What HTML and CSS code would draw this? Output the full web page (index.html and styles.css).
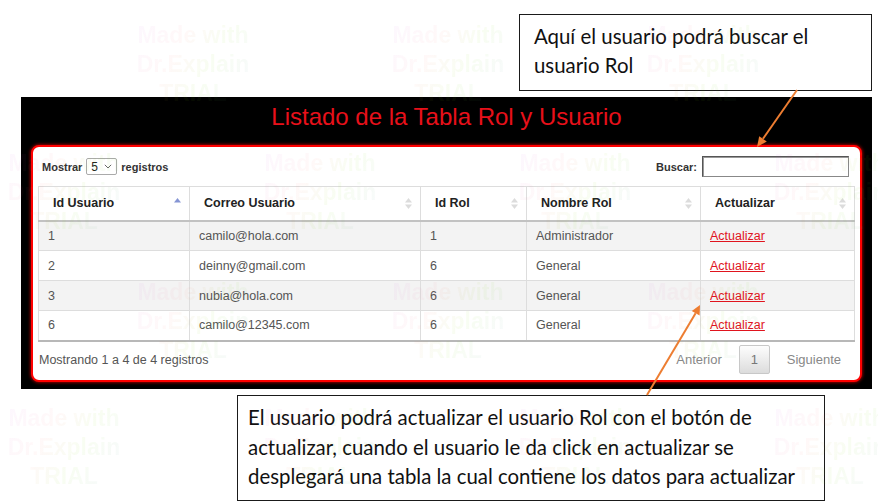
FILE: index.html
```html
<!DOCTYPE html>
<html lang="es">
<head>
<meta charset="utf-8">
<title>Listado de la Tabla Rol y Usuario</title>
<link rel="stylesheet" href="styles.css">
</head>
<body>
<div class="page">
  <div class="note note-top">Aquí el usuario podrá buscar el<br>usuario Rol</div>

  <section class="panel">
    <h1 class="title">Listado de la Tabla Rol y Usuario</h1>
    <div class="card">
      <div class="controls">
        <div class="length">Mostrar
          <span class="select"><span>5</span>
            <svg width="8" height="5" viewBox="0 0 8 5"><path d="M0.8 0.8 L4 4 L7.2 0.8" fill="none" stroke="#666" stroke-width="1"/></svg>
          </span>
          registros</div>
        <label class="search">Buscar: <input type="text" class="search-input"></label>
      </div>

      <table class="grid">
        <colgroup>
          <col class="c1"><col class="c2"><col class="c3"><col class="c4"><col class="c5">
        </colgroup>
        <thead>
          <tr>
            <th><div class="th-in">Id Usuario<svg class="sort asc" width="7" height="11" viewBox="0 0 7 11"><path class="up" d="M0 4.5 L3.5 0 L7 4.5Z"/><path class="down" d="M0 6.5 L3.5 11 L7 6.5Z"/></svg></div></th>
            <th><div class="th-in">Correo Usuario<svg class="sort" width="7" height="11" viewBox="0 0 7 11"><path class="up" d="M0 4.5 L3.5 0 L7 4.5Z"/><path class="down" d="M0 6.5 L3.5 11 L7 6.5Z"/></svg></div></th>
            <th><div class="th-in">Id Rol<svg class="sort" width="7" height="11" viewBox="0 0 7 11"><path class="up" d="M0 4.5 L3.5 0 L7 4.5Z"/><path class="down" d="M0 6.5 L3.5 11 L7 6.5Z"/></svg></div></th>
            <th><div class="th-in">Nombre Rol<svg class="sort" width="7" height="11" viewBox="0 0 7 11"><path class="up" d="M0 4.5 L3.5 0 L7 4.5Z"/><path class="down" d="M0 6.5 L3.5 11 L7 6.5Z"/></svg></div></th>
            <th><div class="th-in">Actualizar<svg class="sort" width="7" height="11" viewBox="0 0 7 11"><path class="up" d="M0 4.5 L3.5 0 L7 4.5Z"/><path class="down" d="M0 6.5 L3.5 11 L7 6.5Z"/></svg></div></th>
          </tr>
        </thead>
        <tbody>
          <tr class="odd"><td>1</td><td>camilo@hola.com</td><td>1</td><td>Administrador</td><td><a href="#">Actualizar</a></td></tr>
          <tr><td>2</td><td>deinny@gmail.com</td><td>6</td><td>General</td><td><a href="#">Actualizar</a></td></tr>
          <tr class="odd"><td>3</td><td>nubia@hola.com</td><td>6</td><td>General</td><td><a href="#">Actualizar</a></td></tr>
          <tr><td>6</td><td>camilo@12345.com</td><td>6</td><td>General</td><td><a href="#">Actualizar</a></td></tr>
        </tbody>
      </table>

      <div class="footer">
        <span class="info">Mostrando 1 a 4 de 4 registros</span>
        <div class="paging">
          <span class="pg">Anterior</span>
          <span class="pg-btn">1</span>
          <span class="pg">Siguiente</span>
        </div>
      </div>
    </div>
  </section>

  <div class="note note-bottom">El usuario podrá actualizar el usuario Rol con el botón de<br>actualizar, cuando el usuario le da click en actualizar se<br>desplegará una tabla la cual contiene los datos para actualizar</div>

  <svg class="arrows" width="878" height="503" viewBox="0 0 878 503">
    <line x1="797" y1="90" x2="763" y2="138.8" stroke="#ED7D31" stroke-width="2"/>
    <polygon points="757,147 759.2,136.3 766.8,141.4" fill="#ED7D31"/>
    <line x1="647" y1="395" x2="695.6" y2="313.3" stroke="#ED7D31" stroke-width="2"/>
    <polygon points="700,305 699.6,315.6 691.8,311" fill="#ED7D31"/>
  </svg>

  <div class="watermarks" aria-hidden="true">
    <div class="wm w1">Made with<br>Dr.Explain<br>TRIAL</div>
    <div class="wm w2">Made with<br>Dr.Explain<br>TRIAL</div>
    <div class="wm w3">Made with<br>Dr.Explain<br>TRIAL</div>
    <div class="wm w4">Made with<br>Dr.Explain<br>TRIAL</div>
    <div class="wm w5">Made with<br>Dr.Explain<br>TRIAL</div>
    <div class="wm w6">Made with<br>Dr.Explain<br>TRIAL</div>
    <div class="wm w7">Made with<br>Dr.Explain<br>TRIAL</div>
    <div class="wm w8">Made with<br>Dr.Explain<br>TRIAL</div>
    <div class="wm w9">Made with<br>Dr.Explain<br>TRIAL</div>
    <div class="wm w10">Made with<br>Dr.Explain<br>TRIAL</div>
    <div class="wm w11">Made with<br>Dr.Explain<br>TRIAL</div>
    <div class="wm w12">Made with<br>Dr.Explain<br>TRIAL</div>
    <div class="wm w13">Made with<br>Dr.Explain<br>TRIAL</div>
    <div class="wm w14">Made with<br>Dr.Explain<br>TRIAL</div>
  </div>
</div>
</body>
</html>
```

FILE: styles.css
```css
* { box-sizing: border-box; }

html, body {
  margin: 0;
  padding: 0;
  background: #fff;
}

.page {
  position: relative;
  width: 878px;
  height: 503px;
  overflow: hidden;
  display: flex;
  flex-direction: column;
  align-items: flex-start;
  font-family: "Liberation Sans", Arial, sans-serif;
}

/* Callout notes */
.note {
  border: 1px solid #1a1a1a;
  background: #fff;
  font-family: Lato, "Open Sans", sans-serif;
  font-size: 20.4px;
  color: #111;
  line-height: 29.5px;
  white-space: nowrap;
  position: relative;
  z-index: 3;
}

.note-top {
  margin: 14px 0 0 519px;
  width: 353px;
  height: 77px;
  padding: 7px 0 0 14px;
  line-height: 29px;
}

.note-bottom {
  margin: 6px 0 0 237px;
  width: 588px;
  height: 106px;
  padding: 7px 0 0 10px;
}

/* Black panel */
.panel {
  margin: 6px 0 0 21px;
  width: 851px;
  height: 292px;
  background: #000;
  padding: 0 10px 7px 10px;
  display: flex;
  flex-direction: column;
}

.title {
  margin: 0;
  height: 48px;
  padding-top: 6px;
  line-height: 28px;
  font-size: 24px;
  font-weight: normal;
  color: #e8101a;
  text-align: center;
  font-family: "Liberation Sans", Arial, sans-serif;
}

.card {
  flex: 1;
  background: #fff;
  border: 2px solid #f00;
  border-radius: 8px;
  box-shadow: 0 0 3px 1px rgba(255, 0, 0, 0.55);
  padding: 0 6px 0 5px;
  display: flex;
  flex-direction: column;
}

/* Controls */
.controls {
  height: 21px;
  margin: 9px 0 9px;
  padding: 0 5px 0 4px;
  display: flex;
  justify-content: space-between;
  align-items: center;
  font-size: 11px;
  font-weight: bold;
  color: #333;
}

.length {
  display: flex;
  align-items: center;
  gap: 4px;
}

.select {
  width: 31px;
  height: 17px;
  border: 1px solid #aaa;
  border-radius: 2px;
  display: flex;
  align-items: center;
  justify-content: space-between;
  padding: 0 4px 0 4px;
  font-size: 12px;
  font-weight: normal;
  color: #222;
  background: #fff;
}

.search {
  display: flex;
  align-items: center;
  gap: 5px;
}

.search-input {
  width: 147px;
  height: 21px;
  border: 1px solid #555;
  border-right-color: #888;
  border-bottom-color: #888;
  box-shadow: inset 1px 1px 0 #999;
  margin: 0;
  padding: 0 4px;
  background: #fff;
}

/* Table */
.grid {
  width: 816px;
  border-collapse: collapse;
  table-layout: fixed;
  font-size: 12.5px;
}

.c1 { width: 151px; }
.c2 { width: 231px; }
.c3 { width: 106px; }
.c4 { width: 174px; }
.c5 { width: 154px; }

.grid th {
  height: 34px;
  padding: 0 8px 0 14px;
  text-align: left;
  font-weight: bold;
  color: #222;
  border: 1px solid #ddd;
  border-bottom: 2px solid #c2c2c2;
  background: #fff;
}

.th-in {
  display: flex;
  justify-content: space-between;
  align-items: center;
}

.sort .up, .sort .down { fill: #dcdcdc; }
.sort.asc .up { fill: #8595d4; }
.sort.asc .down { fill: #fff; }

.grid td {
  height: 30px;
  padding: 0 9px;
  color: #555;
  border: 1px solid #ddd;
  background: #fff;
}

.grid tr.odd td { background: #f3f3f3; }

.grid tbody tr:last-child td { border-bottom: 2px solid #b8b8b8; }

.grid a {
  color: #e0141e;
  text-decoration: underline;
}

/* Footer */
.footer {
  height: 28px;
  margin-top: 4px;
  display: flex;
  align-items: center;
  justify-content: space-between;
  padding: 0 13px 0 1px;
  font-size: 12.5px;
  color: #555;
}

.paging {
  display: flex;
  align-items: center;
  gap: 17px;
  font-size: 13px;
  color: #888;
}

.pg-btn {
  width: 31px;
  height: 29px;
  border: 1px solid #c8c8c8;
  border-radius: 2px;
  background: linear-gradient(#fdfdfd, #dcdcdc);
  display: flex;
  align-items: center;
  justify-content: center;
  color: #777;
}

/* Arrows overlay */
.arrows {
  position: absolute;
  left: 0;
  top: 0;
  pointer-events: none;
  z-index: 4;
}

/* Watermarks overlay */
.watermarks {
  position: absolute;
  inset: 0;
  pointer-events: none;
  z-index: 5;
}

.wm {
  position: absolute;
  width: 124px;
  text-align: center;
  font-family: "Liberation Sans", Arial, sans-serif;
  font-weight: bold;
  font-size: 23px;
  line-height: 29px;
  background: linear-gradient(120deg, rgba(190, 60, 255, 0.04), rgba(255, 80, 80, 0.04) 35%, rgba(120, 220, 0, 0.05) 60%, rgba(40, 90, 255, 0.04));
  -webkit-background-clip: text;
  background-clip: text;
  color: transparent;
}

.w1 { left: 131px; top: 21px; }
.w2 { left: 386px; top: 21px; }
.w3 { left: 641px; top: 21px; }
.w4 { left: 2px; top: 149px; }
.w5 { left: 258px; top: 149px; }
.w6 { left: 513px; top: 149px; }
.w7 { left: 768px; top: 149px; }
.w8 { left: 131px; top: 278px; }
.w9 { left: 386px; top: 278px; }
.w10 { left: 641px; top: 278px; }
.w11 { left: 2px; top: 404px; }
.w12 { left: 258px; top: 404px; }
.w13 { left: 513px; top: 404px; }
.w14 { left: 768px; top: 404px; }
```
